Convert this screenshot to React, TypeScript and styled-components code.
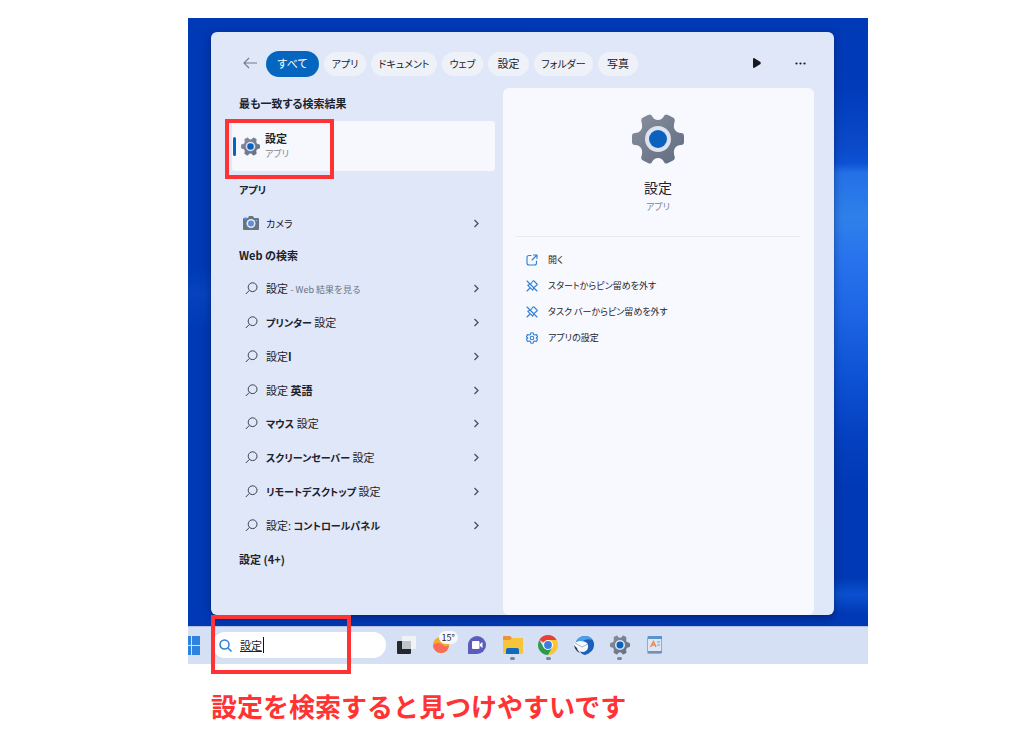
import React from 'react';
import styled, { createGlobalStyle } from 'styled-components';

const Global = createGlobalStyle`
  * { box-sizing: border-box; }
  body {
    margin: 0;
    background: #fff;
    font-family: 'Noto Sans CJK JP', 'Noto Sans', sans-serif;
    font-feature-settings: 'palt';
    font-size: 11px;
    line-height: 16px;
    color: #1d2129;
  }
  h1, h2, p, ul { margin: 0; padding: 0; font-size: inherit; }
  ul { list-style: none; }
  button, input { font: inherit; font-feature-settings: inherit; color: inherit; border: 0; background: none; padding: 0; }
  svg { display: block; flex: none; }
`;

const Page = styled.main`
  padding: 18px 156px 16px 188px;
`;

const Desktop = styled.section`
  display: flex;
  flex-direction: column;
  background:
    linear-gradient(180deg, #0039b5 0, #003bba 70px, #0a49c8 125px, #0d51d4 145px, #2470e6 155px, #2f80ea 200px, #2873ee 240px, #1c64e4 300px, #0d52d4 360px, #0440c0 420px, #0039b5 470px, #0039b5 560px, #0b50cf 576px, #0039b5 596px) right / 50% 100% no-repeat,
    linear-gradient(180deg, #0039b5 0, #0039b5 250px, #0643bd 275px, #0039b5 310px);
`;

const Panel = styled.div`
  margin: 14px 34px 11px 23px;
  padding: 19px 20px 0 0;
  border-radius: 6px;
  background: linear-gradient(100deg, #dfe7f8, #e0e7f8 60%, #dfe8f8);
  box-shadow: 0 1px 1px rgba(30, 40, 70, 0.8), 0 3px 8px rgba(0, 10, 60, 0.4);
`;

const FilterBar = styled.nav`
  display: flex;
  align-items: center;
  gap: 5px;
  height: 26px;
  padding-left: 28px;
`;

const IconButton = styled.button`
  display: grid;
  place-items: center;
  width: 22px;
  height: 24px;
  padding-bottom: 2px;
`;

const Tools = styled.div`
  display: flex;
  gap: 21px;
  margin-left: auto;
  margin-right: 3px;
`;

const Pill = styled.button<{ $w: number; $active?: boolean }>`
  width: ${p => p.$w}px;
  height: ${p => (p.$active ? 26 : 24)}px;
  padding-bottom: 2px;
  border-radius: 13px;
  white-space: nowrap;
  background: ${p => (p.$active ? '#0566c0' : '#eff1f8')};
  color: ${p => (p.$active ? '#fff' : '#1d2129')};
`;

const Body = styled.div`
  display: flex;
  gap: 8px;
  margin-top: 11px;
  min-height: 527px;
`;

const Results = styled.div`
  flex: 0 0 284px;
  padding-left: 21px;
`;

const Heading = styled.h2<{ $h?: number; $top?: number; $bottom?: number }>`
  display: flex;
  align-items: center;
  height: ${p => p.$h ?? 33}px;
  padding: ${p => p.$top ?? 0}px 0 ${p => p.$bottom ?? 0}px 7px;
  font-weight: 600;
`;

const BestMatch = styled.div`
  position: relative;
`;

const BestButton = styled.button`
  display: flex;
  align-items: center;
  gap: 5px;
  width: 100%;
  height: 50px;
  padding-left: 1px;
  border-radius: 3px;
  background: #f6f8fe;
  text-align: left;
`;

const Accent = styled.span`
  width: 3px;
  height: 19px;
  border-radius: 2px;
  background: #0566c0;
`;

const Name = styled.strong`
  display: block;
  font-weight: 600;
`;

const Kind = styled.span`
  display: block;
  font-size: 9px;
  color: #7b8494;
`;

const Highlight = styled.span<{ $box: string }>`
  position: absolute;
  inset: ${p => p.$box};
  border: 4px solid #ff3333;
  pointer-events: none;
`;

const List = styled.ul<{ $h: number }>`
  display: grid;
  grid-auto-rows: 1fr;
  height: ${p => p.$h}px;
`;

const Row = styled.button`
  display: flex;
  align-items: center;
  gap: 6px;
  width: 100%;
  height: 100%;
  padding: 0 15px 0 10px;
  text-align: left;
  white-space: nowrap;
`;

const Lead = styled.span`
  display: grid;
  place-items: center;
  width: 18px;
`;

const Label = styled.span`
  flex: 1;
`;

const Kana = styled.span<{ $bold?: boolean }>`
  font-size: 10px;
  font-weight: ${p => (p.$bold ? 700 : 400)};
`;

const Hint = styled.span`
  font-size: 9px;
  font-feature-settings: normal;
  color: #6b7383;
`;

const Detail = styled.article`
  flex: 1;
  display: flex;
  flex-direction: column;
  padding: 25px 14px 0 13px;
  border-radius: 6px;
  background: #f7f9fe;
`;

const AppCard = styled.header`
  display: flex;
  flex-direction: column;
  align-items: center;
  padding-bottom: 21px;
  border-bottom: 1px solid #e9ebf1;
`;

const AppTitle = styled.h1`
  margin: 11px 0 1px;
  font-size: 14px;
  line-height: 22px;
  font-weight: 400;
`;

const Actions = styled.ul`
  padding: 10px 0 0 10px;
`;

const Action = styled.button`
  display: flex;
  align-items: center;
  gap: 10px;
  height: 26px;
  font-size: 9px;
`;

const Taskbar = styled.footer`
  display: flex;
  align-items: center;
  height: 38px;
  padding-bottom: 1px;
  border-top: 1px solid #b3c0de;
  background: #d6e0f5;
`;

const SearchBox = styled.label`
  position: relative;
  display: flex;
  align-items: center;
  gap: 8px;
  width: 174px;
  height: 26px;
  margin-left: 12px;
  padding-left: 7px;
  border-radius: 13px;
  background: #fff;
`;

const SearchInput = styled.input`
  width: 24px;
  height: 16px;
  text-decoration: underline;
  border-right: 1px solid #111;
  outline: 0;
`;

const Apps = styled.div`
  display: grid;
  grid-template-columns: repeat(8, 1fr);
  width: 285px;
  height: 100%;
  margin-left: 2px;
`;

const AppButton = styled.button<{ $open?: boolean }>`
  position: relative;
  display: grid;
  place-items: center;
  &::after {
    content: '';
    display: ${p => (p.$open ? 'block' : 'none')};
    position: absolute;
    bottom: 3px;
    width: 5px;
    height: 3px;
    border-radius: 2px;
    background: #7d8492;
  }
`;

const Badge = styled.span`
  position: absolute;
  top: 4px;
  left: 15px;
  width: 19px;
  height: 13px;
  border-radius: 7px;
  background: #f6f8fd;
  font-size: 9px;
  line-height: 13px;
`;

const Caption = styled.p`
  margin: 23px 0 0 23px;
  font-size: 26px;
  line-height: 38px;
  font-weight: 700;
  font-feature-settings: normal;
  color: #ff3333;
  white-space: nowrap;
`;

const Gear = ({ size }: { size: number }) => {
  const id = React.useId();
  return (
    <svg width={size} height={size} viewBox="0 0 52 52">
      <defs>
        <linearGradient id={id} x1="0" y1="0" x2="1" y2="1">
          <stop offset="0" stopColor="#8a919d" />
          <stop offset="1" stopColor="#5f6b80" />
        </linearGradient>
      </defs>
      <path fill={`url(#${id})`} d="M16 2 Q19 .500 20 3 Q22 7 26 7 Q30 7 32 3 Q33 .500 36 2 L41 4.500 Q43.500 6 42.500 9 Q41 14 43 17 Q45 20 49 20 Q52 20 52 23 V29 Q52 32 49 32 Q45 32 43 35 Q41 38 42.500 43 Q43.500 46 41 47.500 L36 50 Q33 51.500 32 49 Q30 45 26 45 Q22 45 20 49 Q19 51.500 16 50 L11 47.500 Q8.500 46 9.500 43 Q11 38 9 35 Q7 32 3 32 Q0 32 0 29 V23 Q0 20 3 20 Q7 20 9 17 Q11 14 9.500 9 Q8.500 6 11 4.500Z" />
      <circle cx="26" cy="26" r="13" fill="#dde3f0" />
      <circle cx="26" cy="26" r="9" fill="#0b62bd" />
    </svg>
  );
};

const Lens = () => (
  <svg width="13" height="13" viewBox="0 0 13 13" fill="none" stroke="#3b414d" strokeWidth="1">
    <circle cx="7.6" cy="5.2" r="4.4" />
    <path d="M4.4 8.4 L.8 12" />
  </svg>
);

const Chevron = () => (
  <svg width="7" height="9" viewBox="0 0 7 9" fill="none" stroke="#4a505c" strokeWidth="1.3">
    <path d="M1.5 1 L5 4.5 L1.5 8" />
  </svg>
);

const Camera = () => (
  <svg width="16" height="14" viewBox="0 0 16 14">
    <path d="M0 3 Q0 2 1 2 H5 L6 0 H10 L11 2 H15 Q16 2 16 3 V13 Q16 14 15 14 H1 Q0 14 0 13Z" fill="#6a7380" />
    <path d="M1 1.500h3v1.500h-3z" fill="#55a0e8" />
    <circle cx="8" cy="7.500" r="4.500" fill="#e3e9f5" />
    <circle cx="8" cy="7.500" r="3" fill="#5b8fe0" />
    <circle cx="13.500" cy="4.500" r=".8" fill="#6fb0f0" />
  </svg>
);

const blue = { fill: 'none', stroke: '#2f7fd6', strokeWidth: 1.1, strokeLinecap: 'round', strokeLinejoin: 'round' } as const;

const OpenIcon = () => (
  <svg width="12" height="12" viewBox="0 0 12 12" {...blue}>
    <path d="M5 1.500H3Q1 1.500 1 3.500V9Q1 11 3 11H8.500Q10.500 11 10.500 9V7M7.500 1H11V4.500M11 1L6 6" />
  </svg>
);

const UnpinIcon = () => (
  <svg width="12" height="12" viewBox="0 0 12 12" {...blue}>
    <path d="M1 1L11 11M4 8L1 11M5 3.500L7 1Q7.500 .5 8 1L11 4Q11.500 4.500 11 5L8.500 7M3.500 4.500L1.800 5.300L6.700 10.200L7.500 8.500" />
  </svg>
);

const GearLine = () => (
  <svg width="12" height="12" viewBox="0 0 24 24" {...blue} strokeWidth={2.2}>
    <path d="M9.500 2 Q12 1 14.500 2 L15 5 L17.500 6 L20.500 5 Q22.500 7 23 9.500 L20.500 12 L23 14.500 Q22.500 17 20.500 19 L17.500 18 L15 19 L14.500 22 Q12 23 9.500 22 L9 19 L6.500 18 L3.500 19 Q1.500 17 1 14.500 L3.500 12 L1 9.500 Q1.500 7 3.500 5 L6.500 6 L9 5Z" />
    <circle cx="12" cy="12" r="3.500" />
  </svg>
);

const StartIcon = () => (
  <svg width="12" height="19" viewBox="0 0 12 19" fill="#2f83df">
    <path d="M0 0H3V9H0ZM4 0H12V9H4ZM0 10H3V19H0ZM4 10H12V19H4Z" />
  </svg>
);

const TaskView = () => (
  <svg width="20" height="18" viewBox="0 0 20 18">
    <rect x="1" y="5" width="14" height="13" rx="1" fill="#25282d" />
    <rect x="6" y="0" width="14" height="13" rx="1" fill="#f1f2f6" />
    <rect x="6" y="5" width="9" height="8" fill="#bfc3cb" />
  </svg>
);

const Weather = () => (
  <svg width="18" height="18" viewBox="0 0 18 18">
    <circle cx="9" cy="9" r="8" fill="#f7a928" />
    <path d="M1 9Q6 5 11 9Q14 12 17 9A8 8 0 0 1 1 9Z" fill="#fb6b5b" />
  </svg>
);

const Meet = () => (
  <svg width="18" height="18" viewBox="0 0 18 18">
    <path d="M0 18V9A9 9 0 1 1 9 18Z" fill="#5a5dbd" />
    <rect x="4" y="5" width="7.500" height="8" rx="1" fill="#fff" />
    <path d="M12 8L14.500 6V12L12 10Z" fill="#fff" />
  </svg>
);

const Folder = () => (
  <svg width="20" height="18" viewBox="0 0 20 18">
    <path d="M0 1Q0 0 1 0H7L9 2H19Q20 2 20 3V6H0Z" fill="#f0922f" />
    <path d="M0 4H7L9 2H19Q20 2 20 3V17Q20 18 19 18H1Q0 18 0 17Z" fill="#f8c43c" />
    <path d="M3 18V14Q3 12 5 12H14Q16 12 16 14V18Z" fill="#0f6cbd" />
  </svg>
);

const Chrome = () => (
  <svg width="20" height="20" viewBox="0 0 20 20">
    <path d="M10 10L1.340 5A10 10 0 0 1 18.660 5Z" fill="#ea3f35" />
    <path d="M10 5H18.660A10 10 0 0 1 10 20L14.300 12.500Z" fill="#fbc534" />
    <path d="M1.340 5L5.700 12.500L14.300 12.500L10 20A10 10 0 0 1 1.340 5Z" fill="#2f9a4c" />
    <circle cx="10" cy="10" r="5" fill="#fff" />
    <circle cx="10" cy="10" r="3.900" fill="#3b7de0" />
  </svg>
);

const Mail = () => (
  <svg width="20" height="19" viewBox="0 0 20 19">
    <path d="M2 6Q5 0 11 0Q18 0 20 7Q21 16 11 19Q6 18 6 14Z" fill="#1b5fb8" />
    <path d="M2 5Q5 0 11 0Q16 0 18 4Q13 2 9 5Z" fill="#4ba0ea" />
    <path d="M0 8Q2 5 6 5Q13 5 14 9Q15 14 10 16Q4 16 1 12Z" fill="#f6f8fc" />
    <path d="M1 7L8 11L14 8" fill="none" stroke="#aab6cb" />
    <path d="M0 9Q1 15 6 17Q3 14 3 12Z" fill="#283a60" />
  </svg>
);

const Notes = () => (
  <svg width="16" height="18" viewBox="0 0 16 18">
    <rect x=".5" y=".5" width="14" height="17" rx="1" fill="#dbe7f6" stroke="#93aacb" />
    <rect x="1" y="0" width="14" height="3" fill="#5c93cd" />
    <path d="M3.500 11L6.500 5.500L9 11M4.500 9H8" fill="none" stroke="#f08a4b" strokeWidth="1.400" />
    <path d="M10 6H13M10 9H13" stroke="#6ea0dc" />
    <path d="M1 16H15" stroke="#7590b5" strokeWidth="2" />
  </svg>
);

const filters: [React.ReactNode, number][] = [
  [<Kana>アプリ</Kana>, 42],
  [<Kana>ドキュメント</Kana>, 66],
  [<Kana>ウェブ</Kana>, 41],
  ['設定', 41],
  [<Kana>フォルダー</Kana>, 59],
  ['写真', 40],
];

const suggestions: React.ReactNode[] = [
  <>設定 <Hint>- Web 結果を見る</Hint></>,
  <><Kana $bold>プリンター</Kana> 設定</>,
  <>設定<b>I</b></>,
  <>設定 <b>英語</b></>,
  <><Kana $bold>マウス</Kana> 設定</>,
  <><Kana $bold>スクリーンセーバー</Kana> 設定</>,
  <><Kana $bold>リモートデスクトップ</Kana> 設定</>,
  <>設定: <Kana $bold>コントロールパネル</Kana></>,
];

const actions: [React.ReactNode, string][] = [
  [<OpenIcon />, '開く'],
  [<UnpinIcon />, 'スタートからピン留めを外す'],
  [<UnpinIcon />, 'タスク バーからピン留めを外す'],
  [<GearLine />, 'アプリの設定'],
];

const apps: { name: string; icon: React.ReactNode; open?: boolean; badge?: string }[] = [
  { name: 'タスク ビュー', icon: <TaskView /> },
  { name: '天気', icon: <Weather />, badge: '15°' },
  { name: 'チャット', icon: <Meet /> },
  { name: 'エクスプローラー', icon: <Folder />, open: true },
  { name: 'Chrome', icon: <Chrome />, open: true },
  { name: 'メール', icon: <Mail /> },
  { name: '設定', icon: <Gear size={20} />, open: true },
  { name: 'ワードパッド', icon: <Notes /> },
];

export default function App() {
  return (
    <Page>
      <Global />
      <Desktop>
        <Panel>
          <FilterBar>
            <IconButton aria-label="戻る">
              <svg width="14" height="12" viewBox="0 0 14 12" fill="none" stroke="#747b89" strokeWidth="1.1">
                <path d="M14 6H1M6 1L1 6L6 11" />
              </svg>
            </IconButton>
            <Pill $w={53} $active>すべて</Pill>
            {filters.map(([name, w], i) => <Pill key={i} $w={w}>{name}</Pill>)}
            <Tools>
              <IconButton aria-label="再生">
                <svg width="8" height="10" viewBox="0 0 8 10" fill="#17191e"><path d="M1 0L7.500 4Q8 5 7.500 6L1 10Q0 10 0 9V1Q0 0 1 0Z" /></svg>
              </IconButton>
              <IconButton aria-label="その他">
                <svg width="11" height="3" viewBox="0 0 11 3" fill="#17191e">
                  <circle cx="1.500" cy="1.500" r="1.100" /><circle cx="5.500" cy="1.500" r="1.100" /><circle cx="9.500" cy="1.500" r="1.100" />
                </svg>
              </IconButton>
            </Tools>
          </FilterBar>
          <Body>
            <Results>
              <Heading $bottom={4}>最も一致する検索結果</Heading>
              <BestMatch>
                <BestButton>
                  <Accent />
                  <Gear size={19} />
                  <span><Name>設定</Name><Kind>アプリ</Kind></span>
                </BestButton>
                <Highlight $box="-2px 161px -8px -7px" />
              </BestMatch>
              <Heading $h={35} $top={2}><Kana $bold>アプリ</Kana></Heading>
              <List $h={34}>
                <li><Row><Lead><Camera /></Lead><Label><Kana>カメラ</Kana></Label><Chevron /></Row></li>
              </List>
              <Heading $h={32} $bottom={2}>Web の検索</Heading>
              <List $h={270}>
                {suggestions.map((s, i) => (
                  <li key={i}><Row><Lead><Lens /></Lead><Label>{s}</Label><Chevron /></Row></li>
                ))}
              </List>
              <Heading>設定 (4+)</Heading>
            </Results>
            <Detail>
              <AppCard>
                <Gear size={52} />
                <AppTitle>設定</AppTitle>
                <Kind>アプリ</Kind>
              </AppCard>
              <Actions>
                {actions.map(([icon, text]) => <li key={text}><Action>{icon}{text}</Action></li>)}
              </Actions>
            </Detail>
          </Body>
        </Panel>
        <Taskbar>
          <button aria-label="スタート"><StartIcon /></button>
          <SearchBox>
            <svg width="13" height="13" viewBox="0 0 13 13" fill="none" stroke="#2f7fd6" strokeWidth="1.500">
              <circle cx="5.500" cy="5.500" r="4.500" /><path d="M9 9L12.500 12.500" />
            </svg>
            <SearchInput aria-label="検索" defaultValue="設定" />
            <Highlight $box="-17px 35px -16px -1px" />
          </SearchBox>
          <Apps>
            {apps.map(a => (
              <AppButton key={a.name} aria-label={a.name} $open={a.open}>
                {a.icon}
                {a.badge && <Badge>{a.badge}</Badge>}
              </AppButton>
            ))}
          </Apps>
        </Taskbar>
      </Desktop>
      <Caption>設定を検索すると見つけやすいです</Caption>
    </Page>
  );
}
